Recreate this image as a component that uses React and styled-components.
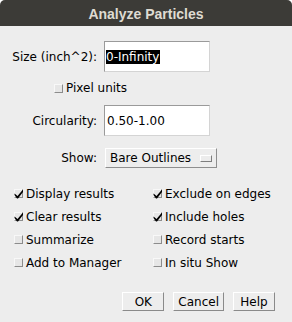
import React from "react";
import styled, { createGlobalStyle } from "styled-components";

const GlobalStyle = createGlobalStyle`
  html, body {
    margin: 0;
    padding: 0;
    background: #ffffff;
  }
`;

const Window = styled.div`
  width: 292px;
  height: 322px;
  overflow: hidden;
  background: #ededed;
  border-radius: 5px 5px 0 0;
  font-family: "DejaVu Sans", sans-serif;
  font-size: 12px;
  color: #000;
`;

const TitleBar = styled.div`
  height: 26px;
  background: #3c3b37;
  color: #dfdbd2;
  font-family: "Liberation Sans", Arial, sans-serif;
  font-weight: bold;
  font-size: 14px;
  display: flex;
  align-items: center;
  justify-content: center;
  padding-top: 1px;
  box-sizing: border-box;
`;

const Body = styled.div`
  display: flex;
  flex-direction: column;
  padding-top: 15px;
`;

const FieldRow = styled.div`
  display: grid;
  grid-template-columns: 97px auto;
  column-gap: 7px;
  align-items: center;
  margin-top: ${(p) => p.$top || 0}px;
`;

const Label = styled.div`
  text-align: right;
  white-space: nowrap;
`;

const TextField = styled.div`
  width: 106px;
  height: 31px;
  box-sizing: border-box;
  background: #ffffff;
  border: 1px solid;
  border-color: #9a9a9a #d4d4d4 #d4d4d4 #9a9a9a;
  display: flex;
  align-items: center;
  padding-left: ${(p) => (p.$selected ? 1 : 2)}px;
  white-space: nowrap;
`;

const Selection = styled.span`
  background: #000;
  color: #fff;
  line-height: 14px;
  padding-right: 1px;
`;

const Choice = styled.div`
  width: 112px;
  height: 20px;
  box-sizing: border-box;
  margin-left: 1px;
  border: 1px solid;
  border-color: #ffffff #8e8e8e #8e8e8e #ffffff;
  display: flex;
  align-items: center;
  justify-content: space-between;
  padding: 0 4px 0 4px;
  white-space: nowrap;
`;

const ChoiceMark = styled.span`
  width: 12px;
  height: 7px;
  box-sizing: border-box;
  border: 1px solid;
  border-color: #ffffff #7e7e7e #7e7e7e #ffffff;
  background: #ececec;
`;

const SingleCheck = styled.div`
  margin-top: 8px;
  padding-left: 54px;
  height: 16px;
  display: flex;
  align-items: center;
`;

const CheckGrid = styled.div`
  margin-top: 14px;
  padding-left: 14px;
  display: grid;
  grid-template-columns: 139px auto;
  grid-auto-rows: 23px;
  align-items: center;
`;

const CheckItem = styled.label`
  display: flex;
  align-items: center;
  gap: 3px;
  white-space: nowrap;
`;

const Box = styled.span`
  position: relative;
  width: 9px;
  height: 9px;
  box-sizing: border-box;
  border: 1px solid;
  border-color: #f8f8f8 #8c8c8c #8c8c8c #f8f8f8;
  background: #e6e6e6;
  flex: none;

  svg {
    position: absolute;
    left: -1px;
    top: -1px;
  }
`;

const ButtonRow = styled.div`
  margin-top: 18px;
  padding-right: 17px;
  display: flex;
  justify-content: flex-end;
  gap: 9px;
`;

const Button = styled.div`
  height: 19px;
  min-width: 42px;
  box-sizing: border-box;
  padding: 0 4px;
  border: 1px solid;
  border-color: #ffffff #8a8a8a #8a8a8a #ffffff;
  display: flex;
  align-items: center;
  justify-content: center;
  white-space: nowrap;
`;

function Check({ checked, children }) {
  return (
    <CheckItem>
      <Box>
        {checked && (
          <svg width="10" height="10" viewBox="0 0 10 10">
            <path d="M0.5 4.5 L3.5 7 L9 0.5 L9 3 L4 9.5 L3 9.5 L0.5 6 Z" fill="#000" />
          </svg>
        )}
      </Box>
      {children}
    </CheckItem>
  );
}

export default function App() {
  return (
    <>
      <GlobalStyle />
      <Window>
        <TitleBar>Analyze Particles</TitleBar>
        <Body>
          <FieldRow>
            <Label>Size (inch^2):</Label>
            <TextField $selected>
              <Selection>0-Infinity</Selection>
            </TextField>
          </FieldRow>
          <SingleCheck>
            <Check>Pixel units</Check>
          </SingleCheck>
          <FieldRow $top={9}>
            <Label>Circularity:</Label>
            <TextField>0.50-1.00</TextField>
          </FieldRow>
          <FieldRow $top={12}>
            <Label>Show:</Label>
            <Choice>
              Bare Outlines
              <ChoiceMark />
            </Choice>
          </FieldRow>
          <CheckGrid>
            <Check checked>Display results</Check>
            <Check checked>Exclude on edges</Check>
            <Check checked>Clear results</Check>
            <Check checked>Include holes</Check>
            <Check>Summarize</Check>
            <Check>Record starts</Check>
            <Check>Add to Manager</Check>
            <Check>In situ Show</Check>
          </CheckGrid>
          <ButtonRow>
            <Button>OK</Button>
            <Button>Cancel</Button>
            <Button>Help</Button>
          </ButtonRow>
        </Body>
      </Window>
    </>
  );
}
